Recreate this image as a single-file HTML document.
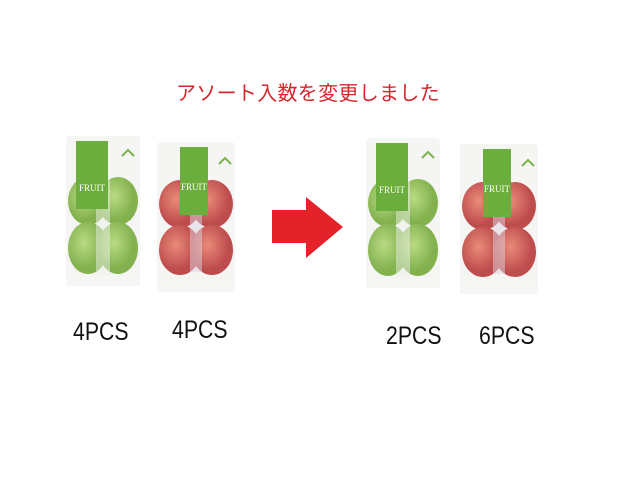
<!DOCTYPE html>
<html><head><meta charset="utf-8"><style>
body{margin:0;width:640px;height:480px;background:#fff;position:relative;overflow:hidden;font-family:"Liberation Sans","Noto Sans CJK JP",sans-serif}
.t{position:absolute;color:#d4262c;font-size:20px;left:176px;top:77px;letter-spacing:0.3px;white-space:nowrap}
.l{position:absolute;font-size:25px;color:#111;transform:scaleX(0.85);transform-origin:left top}
svg{position:absolute}
</style></head><body>
<div class="t">アソート入数を変更しました</div>
<svg width="640" height="480" style="left:0;top:0">
<defs>
<radialGradient id="g" cx="40%" cy="40%"><stop offset="0" stop-color="#b4d878"/><stop offset="1" stop-color="#76aa3c"/></radialGradient>
<radialGradient id="r" cx="40%" cy="40%"><stop offset="0" stop-color="#e8806c"/><stop offset="1" stop-color="#b83a3c"/></radialGradient>
<g id="bagG">
<rect x="0" y="0" width="74" height="150" rx="4" fill="#f5f5f3"/>
<g opacity=".9">
<ellipse cx="22" cy="65" rx="20" ry="24" fill="url(#g)"/><ellipse cx="52" cy="65" rx="20" ry="24" fill="url(#g)"/>
<ellipse cx="22" cy="112" rx="20" ry="26" fill="url(#g)"/><ellipse cx="52" cy="112" rx="20" ry="26" fill="url(#g)"/></g>
<rect x="30" y="40" width="14" height="100" fill="#eef2ea" opacity=".5"/>
<rect x="10" y="5" width="32" height="68" fill="#6cae3e"/>
<text x="26" y="55" font-size="9" fill="#fff" text-anchor="middle" font-family="Liberation Serif">FRUIT</text>
<rect x="0" y="140" width="74" height="10" fill="#f6f6f4"/>
<path d="M56 20 l6 -6 l6 6" stroke="#7cb24a" stroke-width="2" fill="none"/>
</g>
<g id="bagR">
<rect x="0" y="0" width="78" height="150" rx="4" fill="#f5f5f3"/>
<g opacity=".9">
<ellipse cx="23" cy="62" rx="21" ry="24" fill="url(#r)"/><ellipse cx="55" cy="62" rx="21" ry="24" fill="url(#r)"/>
<ellipse cx="23" cy="108" rx="21" ry="25" fill="url(#r)"/><ellipse cx="55" cy="108" rx="21" ry="25" fill="url(#r)"/></g>
<rect x="33" y="40" width="12" height="90" fill="#ddd6e4" opacity=".5"/>
<rect x="23" y="5" width="28" height="68" fill="#6cae3e"/>
<text x="37" y="48" font-size="9" fill="#fff" text-anchor="middle" font-family="Liberation Serif">FRUIT</text>
<rect x="0" y="138" width="78" height="12" fill="#f6f6f4"/>
<path d="M62 22 l6 -6 l6 6" stroke="#7cb24a" stroke-width="2" fill="none"/>
</g>
</defs>
<use href="#bagG" x="66" y="136"/>
<use href="#bagR" x="157" y="142"/>
<use href="#bagG" x="366" y="138"/>
<use href="#bagR" x="460" y="144"/>
<path d="M272 210 H306 V197 L343 227 L306 258 V243 H272 Z" fill="#e3222a"/>
</svg>
<div class="l" style="left:73px;top:318px">4PCS</div>
<div class="l" style="left:172px;top:316px">4PCS</div>
<div class="l" style="left:386px;top:322px">2PCS</div>
<div class="l" style="left:479px;top:322px">6PCS</div>
</body></html>
